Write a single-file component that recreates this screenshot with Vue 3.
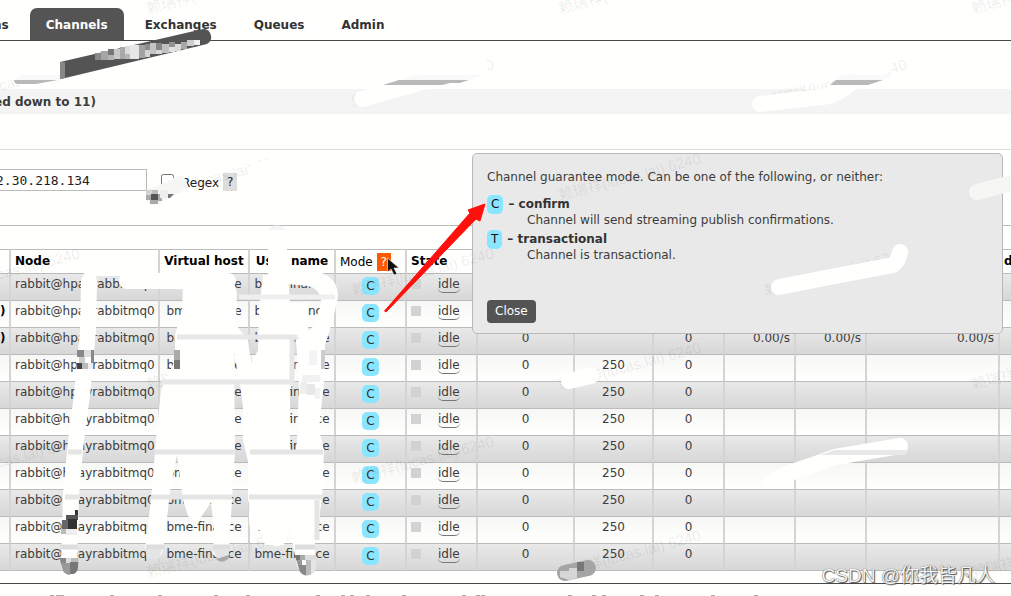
<script setup>
import { ref } from 'vue'

const filter = ref('2.30.218.134')
const regex = ref(false)

const tabs = [
  { label: 'ns' },
  { label: 'Channels', active: true },
  { label: 'Exchanges' },
  { label: 'Queues' },
  { label: 'Admin' }
]

const rows = Array.from({ length: 11 }, (_, i) => ({
  id: i,
  tail: i === 1 || i === 2 ? ')' : '',
  prefetch: i < 3 ? '' : '250',
  rate: i === 2 ? '0.00/s' : ''
}))

const watermarks = [
  [148, 14], [560, 14], [973, 14],
  [-59, 107], [353, 107], [766, 107],
  [148, 201], [560, 201],
  [-61, 296], [353, 296], [766, 296],
  [148, 390], [560, 390], [973, 390],
  [-61, 484], [353, 484],
  [148, 578], [560, 578], [973, 578]
]

// Mosaic cells: x, y, width, height, fill
const mosaic = [
  [95, 53, 6, 7, '#8a8a8a'], [101, 51, 7, 9, '#a5a5a5'], [108, 49, 6, 6, '#777'], [108, 55, 6, 5, '#b3b3b3'],
  [114, 49, 6, 10, '#c9c9c9'], [120, 47, 5, 12, '#a9a9a9'], [125, 46, 5, 8, '#dcdcdc'], [125, 54, 5, 5, '#b5b5b5'],
  [130, 45, 9, 14, '#e6e6e6'], [139, 45, 6, 13, '#a2a2a2'], [145, 44, 5, 6, '#8b8b8b'], [145, 50, 5, 7, '#d2d2d2'],
  [150, 43, 6, 11, '#c4c4c4'], [156, 43, 6, 7, '#868686'], [156, 50, 6, 4, '#d8d8d8'], [162, 44, 7, 9, '#c0c0c0'],
  [169, 42, 6, 5, '#929292'], [169, 47, 6, 5, '#e2e2e2'], [175, 44, 6, 7, '#dadada'], [181, 42, 6, 7, '#a8a8a8'],
  [187, 40, 7, 6, '#cdcdcd'], [194, 40, 6, 5, '#f0f0f0'],
  [146, 190, 6, 6, '#d4d4d4'], [152, 190, 6, 5, '#bbb'], [146, 195, 5, 5, '#aaa'], [151, 194, 7, 7, '#555'],
  [158, 194, 4, 7, '#aaa'], [150, 200, 8, 4, '#aaa'], [160, 190, 8, 8, '#eee'],
  [77, 350, 7, 7, '#888'], [84, 350, 7, 7, '#ddd'], [91, 350, 3, 14, '#888'], [79, 357, 6, 6, '#ccc'],
  [77, 363, 5, 6, '#444'], [82, 363, 6, 6, '#bbb'], [88, 363, 5, 6, '#eee'],
  [174, 350, 6, 10, '#aaa'], [174, 360, 6, 9, '#777'],
  [321, 350, 4, 19, '#ccc'], [309, 350, 8, 15, '#f4f4f4'],
  [302, 375, 18, 7, '#f1f1f1'], [300, 382, 7, 12, '#eee'], [307, 384, 8, 11, '#e8e8e8'], [315, 388, 5, 11, '#f2f2f2'],
  [75, 510, 3, 5, '#333'], [66, 515, 12, 5, '#555'], [62, 520, 8, 9, '#666'],
  [68, 519, 9, 10, '#333'], [61, 529, 5, 5, '#bbb'], [66, 529, 11, 6, '#eee']
]

// The same cells, kept inside the round ends of two strokes
const endMosaic = [
  [58, 558, 8, 5, '#888'], [66, 558, 5, 7, '#ddd'], [71, 558, 8, 7, '#bbb'], [58, 563, 12, 12, '#999'], [70, 562, 10, 12, '#777'],
  [294, 555, 6, 5, '#777'], [300, 555, 5, 5, '#aaa'], [305, 555, 10, 6, '#ddd'], [294, 560, 8, 6, '#999'],
  [296, 565, 10, 12, '#888'], [306, 560, 5, 16, '#bbb'], [311, 560, 6, 14, '#e5e5e5']
]

// Letter tops of the paragraph that starts under the fold
const tops = [50, 56, 60, 110, 158, 214, 246, 316, 341, 350, 366, 402, 462, 476, 481, 568, 592, 602, 640, 655, 711, 754]
</script>

<template>
  <div class="page">
    <nav class="tabs">
      <a v-for="t in tabs" :key="t.label" href="#" :class="{ active: t.active }">{{ t.label }}</a>
    </nav>

    <main>
      <h2 class="section">ed down to 11)</h2>

      <form class="filter" @submit.prevent>
        <input v-model="filter" class="text" type="text" aria-label="Filter" />
        <input id="regex" v-model="regex" class="tick" type="checkbox" />
        <label for="regex">Regex</label>
        <button type="button" class="help">?</button>
      </form>

      <div class="list">
        <table>
          <colgroup>
            <col class="w-name" /><col class="w-node" /><col class="w-host" /><col class="w-user" />
            <col class="w-std" /><col class="w-std" /><col class="w-unconf" /><col class="w-pref" />
            <col class="w-std" /><col class="w-std" /><col class="w-std" /><col class="w-rate" /><col />
          </colgroup>
          <thead>
            <tr>
              <th></th>
              <th class="left">Node</th>
              <th>Virtual host</th>
              <th>User name</th>
              <th class="left plain">Mode <button type="button" class="help hot">?</button></th>
              <th class="left">State</th>
              <th></th><th></th><th></th><th></th><th></th><th></th>
              <th class="left">d</th>
            </tr>
          </thead>
          <tbody>
            <tr v-for="r in rows" :key="r.id">
              <td class="tail">{{ r.tail }}</td>
              <td>rabbit@hpayrabbitmq0</td>
              <td class="mid">bme-finance</td>
              <td class="mid">bme-finance</td>
              <td class="mid"><span class="badge">C</span></td>
              <td><div class="state"><i></i><span>idle</span></div></td>
              <td class="mid">0</td>
              <td class="mid">{{ r.prefetch }}</td>
              <td class="mid">0</td>
              <td class="right">{{ r.rate }}</td>
              <td class="right">{{ r.rate }}</td>
              <td class="right">{{ r.rate }}</td>
              <td></td>
            </tr>
          </tbody>
        </table>
      </div>
    </main>

    <section class="popup" role="dialog" aria-label="Channel guarantee mode">
      <p>Channel guarantee mode. Can be one of the following, or neither:</p>
      <dl>
        <dt><span class="badge">C</span><b>– confirm</b></dt>
        <dd>Channel will send streaming publish confirmations.</dd>
        <dt><span class="badge">T</span><b>– transactional</b></dt>
        <dd>Channel is transactional.</dd>
      </dl>
      <button type="button" class="close">Close</button>
    </section>

    <svg class="overlay" width="1011" height="596" viewBox="0 0 1011 596" aria-hidden="true">
      <defs>
        <clipPath id="ends">
          <path d="M60 550H79L78 566A8 8 0 0 1 62 568L60 560ZM293 550H316V566A9 9 0 0 1 300 572Z" />
        </clipPath>
      </defs>

      <g class="mark">
        <text v-for="(w, i) in watermarks" :key="i" :transform="`translate(${w[0]} ${w[1]}) rotate(-15)`">赖瑞祥(lucas.lai) 6240</text>
      </g>

      <!-- header strokes -->
      <path d="M24 79L70 66" class="brush w16" />
      <path d="M20 75H61V80H14Z" fill="#f9f9f9" />
      <path d="M14 80H58L36 84H18Q14 84 14 80Z" fill="#b9b9b9" />
      <path d="M60 62L203 29A8 8 0 0 1 207 44L61 79Z" fill="#545454" />
      <path d="M60 62H65V78L60 79Z" fill="#888" />

      <path d="M362 99L480 66" class="brush w16" />
      <path d="M418 75H482L470 80H400Z" fill="#f9f9f9" />
      <path d="M399 80H469L460 83H450L442 85H383Z" fill="#b9b9b9" />
      <path d="M760 104L830 96Q840 92 850 84L885 66" class="brush w16" />
      <path d="M842 75H893L883 80H836Z" fill="#f9f9f9" />
      <path d="M836 80H883L868 85H830Z" fill="#b9b9b9" />

      <!-- filter strokes -->
      <path d="M154 197L179 184" stroke="#f6f6f5" class="brush w16 soft" />
      <path d="M165 194L174 194L170 198H165Z" fill="#777" />
      <path d="M257 171L284 162" class="brush w16" />

      <!-- table strokes -->
      <path d="M89 281L88 330L82 395L76 440L71 495L69 566" class="brush w16" />
      <path d="M86 274H123" class="brush w4" />
      <path d="M127 281H228" class="brush w16" />
      <path d="M183 286L232 280L237 292L236 325L248 340L256 400L258 440L255 455V520L248 500V450L241 390L234 352L235 450L232 500L229 550A9 9 0 0 1 213 554L214 530L211 502L197 523L188 516L183 500L177 455L171 485L163 550Q160 562 148 558L145 548L151 500L156 440L161 390L175 360L175 335L182 310Z" class="fill" />
      <path d="M189 360H234V450L211 502L197 523L185 500L178 452L189 420Z" class="fill" />
      <path d="M268 232H287V262L290 303H308V335L292 340V385L290 390V445L295 500L287 540Q277 552 267 540L260 530Q249 536 249 520L250 470L243 440V380L258 350L259 310L263 275H268Z" class="fill" />
      <path d="M288 273H322Q338 279 338 297L333 320L325 345V375L322 400L319 430L324 450L322 500L315 540V565Q305 580 297 566L288 520L297 440L299 385L296 340L312 328L321 305Q322 289 308 286L288 284Z" class="fill" />
      <path d="M255 454H320V520H289L287 505L284 545H265L256 520Z" class="fill" />
      <path d="M268 230A10 8 0 0 1 286 230Z" fill="#f5f5f5" />
      <path d="M239 297H335" stroke="#efefef" class="band" />
      <path d="M177 337H295V335M292 335V385M161 382H292" stroke="#e7e7e7" class="band" />
      <path d="M68 452H82M155 452H235M250 452H323" stroke="#e5e5e5" class="band" />
      <path d="M65 497H80M151 497H232M249 497H323" stroke="#e5e5e5" class="band" />
      <path d="M317 500V540" stroke="#e5e5e5" class="band" />
      <path d="M60 547H78M146 547H164M213 547H230M295 547H315" stroke="#ddd" class="band" />
      <path d="M145 549H162L159 559H147ZM213 549H229V558L218 561Z" fill="#e4e4e4" />
      <path d="M216 559Q222 565 229 558V555Z" fill="#aaa" />

      <path d="M569 381L591 376" class="brush w16" />
      <path d="M565 573L588 568" stroke="#a5a5a5" class="brush w16 soft" />
      <path d="M560 571H569V580L560 577ZM569 568H577V578L569 580Z" fill="#d6d6d6" />
      <path d="M577 562H584V571H577Z" fill="#777" />
      <path d="M773 481Q790 472 810 466L835 457L900 446" class="brush w16" />
      <path d="M835 450H908Q908 455 902 455H820Z" fill="#e8e8e8" />
      <path d="M779 287L820 279L893 265Q899 260 900 252" class="brush w16" />
      <path d="M977 192L1016 182" stroke="#f6f6f5" class="brush w16 soft" />

      <rect v-for="(m, i) in mosaic" :key="'m' + i" :x="m[0]" :y="m[1]" :width="m[2]" :height="m[3]" :fill="m[4]" />
      <g clip-path="url(#ends)">
        <rect v-for="(m, i) in endMosaic" :key="'e' + i" :x="m[0]" :y="m[1]" :width="m[2]" :height="m[3]" :fill="m[4]" />
      </g>

      <!-- pointer arrow -->
      <path d="M384.500 311L470 213L468 210L485 204L480 221L476 219L386 312Z" fill="#ff100c" stroke="#ff100c" />
      <!-- mouse cursor -->
      <path d="M387.500 258V272L391 269L394 275L397 274L394 268H399Z" fill="#111" stroke="#fff" stroke-width="0.600" />

      <rect v-for="x in tops" :key="'t' + x" :x="x" y="595" width="4" height="1" fill="#aaa" />
    </svg>

    <div class="credit">CSDN @你我皆凡人</div>
  </div>
</template>

<style>
body {
  background: #fff;
  overflow: hidden;
}
</style>

<style scoped>
.page {
  position: relative;
  height: 100vh;
  overflow: hidden;
  background: #fffffd;
  color: #3c3c3c;
  font: 12px/15px "DejaVu Sans", Verdana, sans-serif;
}

.tabs {
  display: flex;
  gap: 5px;
  margin-left: -23px;
  padding-top: 8px;
  border-bottom: 1px solid #484848;
}

.tabs a {
  padding: 10px 16px 7px;
  border-radius: 7px 7px 0 0;
  color: #333;
  font-weight: bold;
  text-decoration: none;
}

.tabs a.active {
  background: #545454;
  color: #fff;
}

.section {
  margin: 48px 0 35px -6px;
  padding: 6px 0 4px;
  background: #f4f4f4;
  font-size: 12px;
  line-height: 15px;
}

.filter {
  display: flex;
  align-items: center;
  margin: 0;
  padding: 19px 0 34px;
  border-top: 1px solid #ddd;
  border-bottom: 1px solid #bbb;
  color: #222;
}

.text {
  box-sizing: border-box;
  width: 158px;
  height: 22px;
  margin-left: -11px;
  padding: 0 6px;
  border: 1px solid #bbb;
  background: #fff;
  color: #222;
  font: 13px "DejaVu Sans Mono", monospace;
}

.tick {
  width: 13px;
  height: 13px;
  margin: 0 8px 0 14px;
}

.help {
  height: 18px;
  margin: 4px 0 0 4px;
  padding: 0 4px;
  border: 0;
  background: #ddd;
  color: #222;
  font: 12px/18px "DejaVu Sans", Verdana, sans-serif;
}

.filter label {
  padding-top: 6px;
}

.list {
  padding-top: 23px;
  padding-bottom: 12px;
  border-bottom: 1px solid #484848;
}

table {
  width: 100%;
  table-layout: fixed;
  border-collapse: separate;
  border-spacing: 0;
}

.w-name { width: 9px; }
.w-node { width: 149px; }
.w-host { width: 90px; }
.w-user { width: 86px; }
.w-std { width: 71px; }
.w-unconf { width: 97px; }
.w-pref { width: 79px; }
.w-rate { width: 133px; }

th,
td {
  box-sizing: border-box;
  overflow: hidden;
  padding: 3px 4px 0;
  border-left: 2px solid #d4d4d4;
  border-bottom: 1px solid #bbb;
  white-space: nowrap;
  text-align: left;
}

th {
  height: 25px;
  padding: 0 2px;
  border-top: 1px solid #bbb;
  color: #000;
  text-align: center;
}

th.left {
  padding-left: 4px;
  text-align: left;
}

th.plain {
  font-weight: normal;
}

th:first-child,
td:first-child {
  border-left: 0;
}

td {
  height: 27px;
  vertical-align: top;
}

tbody tr:nth-child(odd) td {
  background: linear-gradient(#e9e9e9, #d7d7d7);
}

tbody tr:nth-child(even) td {
  background: linear-gradient(#f7f7f6, #fffffd);
}

td.tail {
  padding-left: 0;
  padding-right: 8px;
  color: #000;
  font-weight: bold;
  text-align: right;
}

td.mid {
  text-align: center;
}

td.right {
  text-align: right;
}

.hot {
  margin: 0;
  background: #ff5a00;
  color: #fff;
}

.badge {
  display: inline-block;
  padding: 2px 4px;
  border-radius: 5px;
  background: #8ae6ff;
  color: #333;
}

td .badge {
  line-height: 14px;
}

.state {
  display: flex;
  align-items: flex-start;
}

.state i {
  width: 10px;
  height: 10px;
  margin: 2px 17px 0 0;
  background: #d2d2d2;
}

.state span {
  border-bottom: 1px solid #777;
  border-radius: 5px;
}

.popup {
  position: absolute;
  top: 153px;
  right: 8px;
  left: 472px;
  box-sizing: border-box;
  height: 181px;
  padding: 16px 14px;
  border: 1px solid #b8b8b8;
  border-radius: 5px;
  background: #e9e9e9;
}

.popup p {
  margin: 0 0 10px;
}

.popup dl {
  margin: 0 0 37px;
}

.popup dt {
  height: 18px;
  line-height: 19px;
}

.popup dd {
  margin: 0 0 2px 40px;
}

.popup .badge {
  margin-right: 5px;
  line-height: 15px;
  color: #111;
}

.popup b { color: #333; }

.close {
  padding: 4px 8px;
  border: 0;
  border-radius: 4px;
  background: #545454;
  color: #fff;
  font: 12px/15px "DejaVu Sans", Verdana, sans-serif;
}

.overlay {
  position: absolute;
  top: 0;
  left: 0;
  pointer-events: none;
}

.mark text {
  fill: rgba(0, 0, 0, 0.08);
  font: 15px "Liberation Sans", "Noto Sans CJK SC", sans-serif;
}

.brush {
  fill: none;
  stroke-linecap: round;
  stroke-linejoin: round;
}

.brush:not(.soft) { stroke: #fffffd; }
.fill { fill: #fffffd; }
.w16 { stroke-width: 16px; }
.w4 { stroke-width: 4px; }

.band {
  fill: none;
  stroke-width: 5px;
}

.credit {
  position: absolute;
  right: 16px;
  bottom: 8px;
  color: #f4f4f4;
  font: 19px/24px "Liberation Sans", "Noto Sans CJK SC", sans-serif;
  text-shadow: 0 0 1px #444, 1px 1px 1px #555;
  white-space: nowrap;
}
</style>
